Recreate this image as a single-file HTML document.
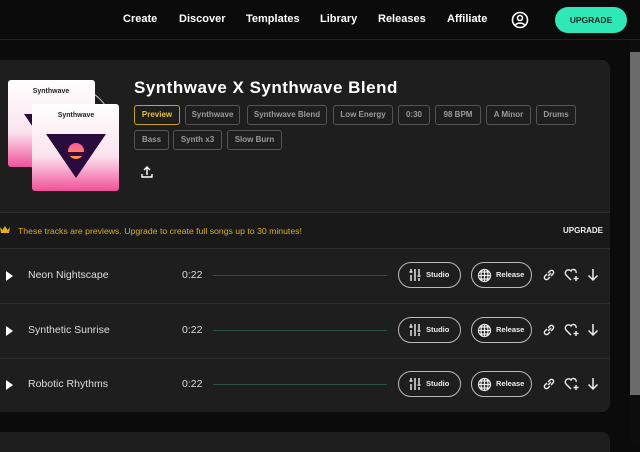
<!DOCTYPE html>
<html><head><meta charset="utf-8"><style>
*{box-sizing:border-box;margin:0;padding:0}
body{width:640px;height:443px;overflow:hidden;background:#0b0b0b;font-family:"Liberation Sans",sans-serif;color:#fff;position:relative}
.nav{position:absolute;top:0;left:0;width:640px;height:40px;border-bottom:1px solid #222}
.nav span{position:absolute;top:13px;font-size:11px;font-weight:bold}
.upg{position:absolute;left:555px;top:7px;width:72px;height:26px;border-radius:13px;background:#2ee8b6;color:#0a2a22;font-size:8.5px;font-weight:bold;text-align:center;line-height:26px}
.sb{position:absolute;left:630px;top:41px;width:10px;height:402px;background:#0d0d0d}
.thumb{position:absolute;left:630px;top:52px;width:10px;height:343px;background:#6b6b6b}
.card{position:absolute;left:0;top:60px;width:610px;height:352px;background:#1e1e1e;border-radius:0 8px 8px 0}
.card2{position:absolute;left:0;top:432px;width:610px;height:20px;background:#1e1e1e;border-radius:0 8px 0 0}
h1{position:absolute;left:134px;top:78px;font-size:17px;font-weight:900;letter-spacing:.5px}
.tag{position:absolute;height:20px;border:1px solid #555;border-radius:3px;font-size:8px;font-weight:bold;color:#9a9a9a;line-height:18px;text-align:center}
.line{position:absolute;left:0;width:610px;height:1px;background:#2e2e2e}
.banner{position:absolute;left:0;top:213px;width:610px;height:35px;background:#191919}
.row{position:absolute;left:0;width:610px;height:54px}
.row .p{position:absolute;left:6px;top:23px;width:0;height:0;border-left:7px solid #fff;border-top:5px solid transparent;border-bottom:5px solid transparent}
.row .t{position:absolute;left:28px;top:21px;font-size:10.5px;color:#ddd}
.row .d{position:absolute;left:182px;top:21px;font-size:10.5px;color:#ddd}
.row .w{position:absolute;left:213px;top:27px;width:174px;height:1px;background:#2b5246}
.btn{position:absolute;top:14px;height:26px;border:1px solid #bbb;border-radius:13px;font-size:7.5px;font-weight:bold;line-height:24px;color:#eee}
.btn svg{position:absolute;left:9px;top:5px}
.ic{position:absolute;top:20px}
</style></head><body>
<div class="nav">
<span style="left:123px">Create</span><span style="left:179px">Discover</span><span style="left:246px">Templates</span><span style="left:320px">Library</span><span style="left:378px">Releases</span><span style="left:447px">Affiliate</span>
<svg style="position:absolute;left:511px;top:11px" width="18" height="18" viewBox="0 0 18 18" fill="none" stroke="#fff" stroke-width="1.6"><circle cx="9" cy="9" r="7.5"/><circle cx="9" cy="7" r="2.5"/><path d="M4.5 14c1.5-2.5 7.5-2.5 9 0"/></svg>
<div class="upg">UPGRADE</div>
</div>
<div class="sb"></div><div class="thumb"></div>
<div class="card"></div><div class="card2"></div>
<svg style="position:absolute;left:6px;top:78px" width="116" height="116" viewBox="0 0 116 116">
<circle cx="60" cy="55" r="48" fill="none" stroke="#ccc" stroke-width="1"/>
<defs><linearGradient id="g" x1="0" y1="0" x2="0" y2="1"><stop offset="0" stop-color="#fff"/><stop offset=".6" stop-color="#fbe3ee"/><stop offset="1" stop-color="#f0519a"/></linearGradient>
<linearGradient id="s" x1="0" y1="0" x2="0" y2="1"><stop offset="0" stop-color="#ff5aa0"/><stop offset="1" stop-color="#ff9a3c"/></linearGradient></defs>
<rect x="2" y="2" width="87" height="87" rx="3" fill="url(#g)"/>
<text x="45" y="15" font-size="7" font-weight="bold" text-anchor="middle" fill="#222" font-family="Liberation Sans">Synthwave</text>
<path d="M18 36h60l-30 44z" fill="#2a0b3d"/>
<rect x="26" y="26" width="87" height="87" rx="3" fill="url(#g)"/>
<text x="70" y="39" font-size="7" font-weight="bold" text-anchor="middle" fill="#222" font-family="Liberation Sans">Synthwave</text>
<path d="M40 56h60l-30 44z" fill="#2a0b3d"/>
<circle cx="70" cy="73" r="8" fill="url(#s)"/>
<rect x="60" y="74" width="20" height="4" fill="#3a0a3a"/>
</svg>
<h1>Synthwave X Synthwave Blend</h1>
<div class="tag" style="left:134px;top:105px;width:46px;border-color:#c9a227;color:#e8c23a">Preview</div>
<div class="tag" style="left:185px;top:105px;width:55px">Synthwave</div>
<div class="tag" style="left:247px;top:105px;width:80px">Synthwave Blend</div>
<div class="tag" style="left:333px;top:105px;width:60px">Low Energy</div>
<div class="tag" style="left:398px;top:105px;width:32px">0:30</div>
<div class="tag" style="left:435px;top:105px;width:46px">98 BPM</div>
<div class="tag" style="left:486px;top:105px;width:45px">A Minor</div>
<div class="tag" style="left:536px;top:105px;width:40px">Drums</div>
<div class="tag" style="left:134px;top:130px;width:35px">Bass</div>
<div class="tag" style="left:173px;top:130px;width:49px">Synth x3</div>
<div class="tag" style="left:227px;top:130px;width:55px">Slow Burn</div>
<svg style="position:absolute;left:141px;top:166px" width="12" height="12" viewBox="0 0 12 12" fill="none" stroke="#fff" stroke-width="1.4"><path d="M6 9V1.5M3 4l3-3 3 3M1 8v3h10V8"/></svg>
<div class="line" style="top:212px"></div>
<div class="banner"><svg style="position:absolute;left:0;top:13px" width="10" height="8" viewBox="0 0 10 8"><path d="M0 1l2.5 3L5 0l2.5 4L10 1 9 7H1z" fill="#e0b020"/></svg><span style="position:absolute;left:18px;top:13px;font-size:8.7px;color:#d9ad2a">These tracks are previews. Upgrade to create full songs up to 30 minutes!</span><span style="position:absolute;left:563px;top:13px;font-size:8px;font-weight:bold;color:#eee">UPGRADE</span></div>
<div class="line" style="top:248px"></div>
<div class="line" style="top:303px"></div>
<div class="line" style="top:358px"></div>
<div class="row" style="top:248px"><div class="p"></div><div class="t">Neon Nightscape</div><div class="d">0:22</div><div class="w"></div>
<div class="btn" style="left:398px;width:63px"><svg width="14" height="14" viewBox="0 0 14 14" stroke="#eee" stroke-width="1.4"><path d="M3 1v3M1.5 4h3M3 7v6M11 1v6M9.5 8h3M11 10v3M7 1v12"/></svg><span style="position:absolute;left:27px">Studio</span></div>
<div class="btn" style="left:471px;width:61px"><svg style="left:5px" width="15" height="15" viewBox="0 0 15 15" fill="none" stroke="#eee" stroke-width="1.2"><circle cx="7.5" cy="7.5" r="6"/><path d="M1.5 7.5h12M7.5 1.5v12M3 4h9M3 11h9M5 2q-2 5.5 0 11M10 2q2 5.5 0 11"/></svg><span style="position:absolute;left:24px">Release</span></div>
<svg class="ic" style="left:542px" width="14" height="14" viewBox="0 0 14 14" fill="none" stroke="#eee" stroke-width="1.4"><path d="M6 8l3-3M5 6L3 8a2 2 0 003 3l2-2M9 8l2-2a2 2 0 00-3-3L6 5"/></svg>
<svg class="ic" style="left:564px" width="15" height="14" viewBox="0 0 15 14" fill="none" stroke="#eee" stroke-width="1.4"><path d="M7 12L2 7a2.7 2.7 0 015-4 2.7 2.7 0 015 2M12 8v5M9.5 10.5h5"/></svg>
<svg class="ic" style="left:587px" width="12" height="14" viewBox="0 0 12 14" fill="none" stroke="#eee" stroke-width="1.5"><path d="M6 1v11M1.5 7.5L6 12l4.5-4.5"/></svg></div>
<div class="row" style="top:303px"><div class="p"></div><div class="t">Synthetic Sunrise</div><div class="d">0:22</div><div class="w"></div>
<div class="btn" style="left:398px;width:63px"><svg width="14" height="14" viewBox="0 0 14 14" stroke="#eee" stroke-width="1.4"><path d="M3 1v3M1.5 4h3M3 7v6M11 1v6M9.5 8h3M11 10v3M7 1v12"/></svg><span style="position:absolute;left:27px">Studio</span></div>
<div class="btn" style="left:471px;width:61px"><svg style="left:5px" width="15" height="15" viewBox="0 0 15 15" fill="none" stroke="#eee" stroke-width="1.2"><circle cx="7.5" cy="7.5" r="6"/><path d="M1.5 7.5h12M7.5 1.5v12M3 4h9M3 11h9M5 2q-2 5.5 0 11M10 2q2 5.5 0 11"/></svg><span style="position:absolute;left:24px">Release</span></div>
<svg class="ic" style="left:542px" width="14" height="14" viewBox="0 0 14 14" fill="none" stroke="#eee" stroke-width="1.4"><path d="M6 8l3-3M5 6L3 8a2 2 0 003 3l2-2M9 8l2-2a2 2 0 00-3-3L6 5"/></svg>
<svg class="ic" style="left:564px" width="15" height="14" viewBox="0 0 15 14" fill="none" stroke="#eee" stroke-width="1.4"><path d="M7 12L2 7a2.7 2.7 0 015-4 2.7 2.7 0 015 2M12 8v5M9.5 10.5h5"/></svg>
<svg class="ic" style="left:587px" width="12" height="14" viewBox="0 0 12 14" fill="none" stroke="#eee" stroke-width="1.5"><path d="M6 1v11M1.5 7.5L6 12l4.5-4.5"/></svg></div>
<div class="row" style="top:357px"><div class="p"></div><div class="t">Robotic Rhythms</div><div class="d">0:22</div><div class="w"></div>
<div class="btn" style="left:398px;width:63px"><svg width="14" height="14" viewBox="0 0 14 14" stroke="#eee" stroke-width="1.4"><path d="M3 1v3M1.5 4h3M3 7v6M11 1v6M9.5 8h3M11 10v3M7 1v12"/></svg><span style="position:absolute;left:27px">Studio</span></div>
<div class="btn" style="left:471px;width:61px"><svg style="left:5px" width="15" height="15" viewBox="0 0 15 15" fill="none" stroke="#eee" stroke-width="1.2"><circle cx="7.5" cy="7.5" r="6"/><path d="M1.5 7.5h12M7.5 1.5v12M3 4h9M3 11h9M5 2q-2 5.5 0 11M10 2q2 5.5 0 11"/></svg><span style="position:absolute;left:24px">Release</span></div>
<svg class="ic" style="left:542px" width="14" height="14" viewBox="0 0 14 14" fill="none" stroke="#eee" stroke-width="1.4"><path d="M6 8l3-3M5 6L3 8a2 2 0 003 3l2-2M9 8l2-2a2 2 0 00-3-3L6 5"/></svg>
<svg class="ic" style="left:564px" width="15" height="14" viewBox="0 0 15 14" fill="none" stroke="#eee" stroke-width="1.4"><path d="M7 12L2 7a2.7 2.7 0 015-4 2.7 2.7 0 015 2M12 8v5M9.5 10.5h5"/></svg>
<svg class="ic" style="left:587px" width="12" height="14" viewBox="0 0 12 14" fill="none" stroke="#eee" stroke-width="1.5"><path d="M6 1v11M1.5 7.5L6 12l4.5-4.5"/></svg></div>
</body></html>
